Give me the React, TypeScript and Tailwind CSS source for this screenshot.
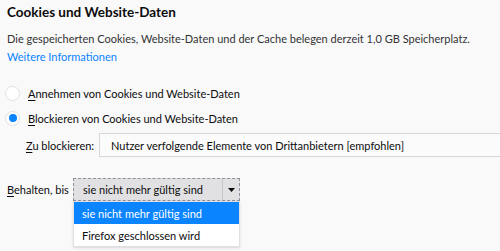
export default function App() {
  return (
    <div className="w-[500px] h-[251px] overflow-hidden bg-[#f9f9fa] text-[#0c0c0d] font-['Lato',sans-serif] text-[11px] leading-none whitespace-nowrap">
      <div className="pl-[7px] pt-[4px]">
        <h2 className="h-[18px] flex items-center text-[13.5px] font-bold">Cookies und Website-Daten</h2>
        <p className="mt-[8px] h-[16px] flex items-center text-[#333]">
          Die gespeicherten Cookies, Website-Daten und der Cache belegen derzeit 1,0 GB Speicherplatz.
        </p>
        <a className="mt-[2px] h-[16px] flex items-center text-[#0a84ff]">Weitere Informationen</a>
      </div>

      <div className="mt-[21px] flex flex-col gap-[9px] pl-[5px]">
        <label className="flex items-center gap-[8px] h-[16px]">
          <span className="w-[15px] h-[15px] rounded-full bg-white border border-[#e0e0e2]" />
          <span>
            <span className="underline underline-offset-2">A</span>nnehmen von Cookies und Website-Daten
          </span>
        </label>
        <label className="flex items-center gap-[8px] h-[16px]">
          <span className="w-[15px] h-[15px] rounded-full bg-white border border-[#e0e0e2] flex items-center justify-center">
            <span className="w-[8px] h-[8px] rounded-full bg-[#0a84ff]" />
          </span>
          <span>
            <span className="underline underline-offset-2">B</span>lockieren von Cookies und Website-Daten
          </span>
        </label>
      </div>

      <div className="mt-[7px] flex items-center pl-[26px]">
        <span className="w-[73px]">
          <span className="underline underline-offset-2">Z</span>u blockieren:
        </span>
        <div className="flex-1 h-[24px] flex items-center pl-[11px] bg-[#fbfbfb] border-y border-l border-[#d7d7db]">
          Nutzer verfolgende Elemente von Drittanbietern [empfohlen]
        </div>
      </div>

      <div className="mt-[21px] flex items-start pl-[7px]">
        <span className="w-[66px] h-[23px] flex items-center">
          <span>
            <span className="underline underline-offset-2">B</span>ehalten, bis
          </span>
        </span>
        <div className="w-[167px] flex flex-col">
          <div className="h-[23px] flex bg-[#e1e1e3] border border-dashed border-[#8f8f9d]">
            <span className="flex-1 flex items-center pl-[9px]">sie nicht mehr gültig sind</span>
            <span className="w-[17px] flex items-center justify-center border-l border-[#c7c7cb]">
              <svg width="7" height="4" viewBox="0 0 7 4">
                <path d="M0 0h7L3.5 4z" fill="#0c0c0d" />
              </svg>
            </span>
          </div>
          <div className="bg-white border border-[#e0e0e2] shadow-sm">
            <div className="h-[22px] flex items-center pl-[8px] bg-[#0a84ff] text-white">sie nicht mehr gültig sind</div>
            <div className="h-[22px] flex items-center pl-[8px]">Firefox geschlossen wird</div>
          </div>
        </div>
      </div>
    </div>
  );
}
